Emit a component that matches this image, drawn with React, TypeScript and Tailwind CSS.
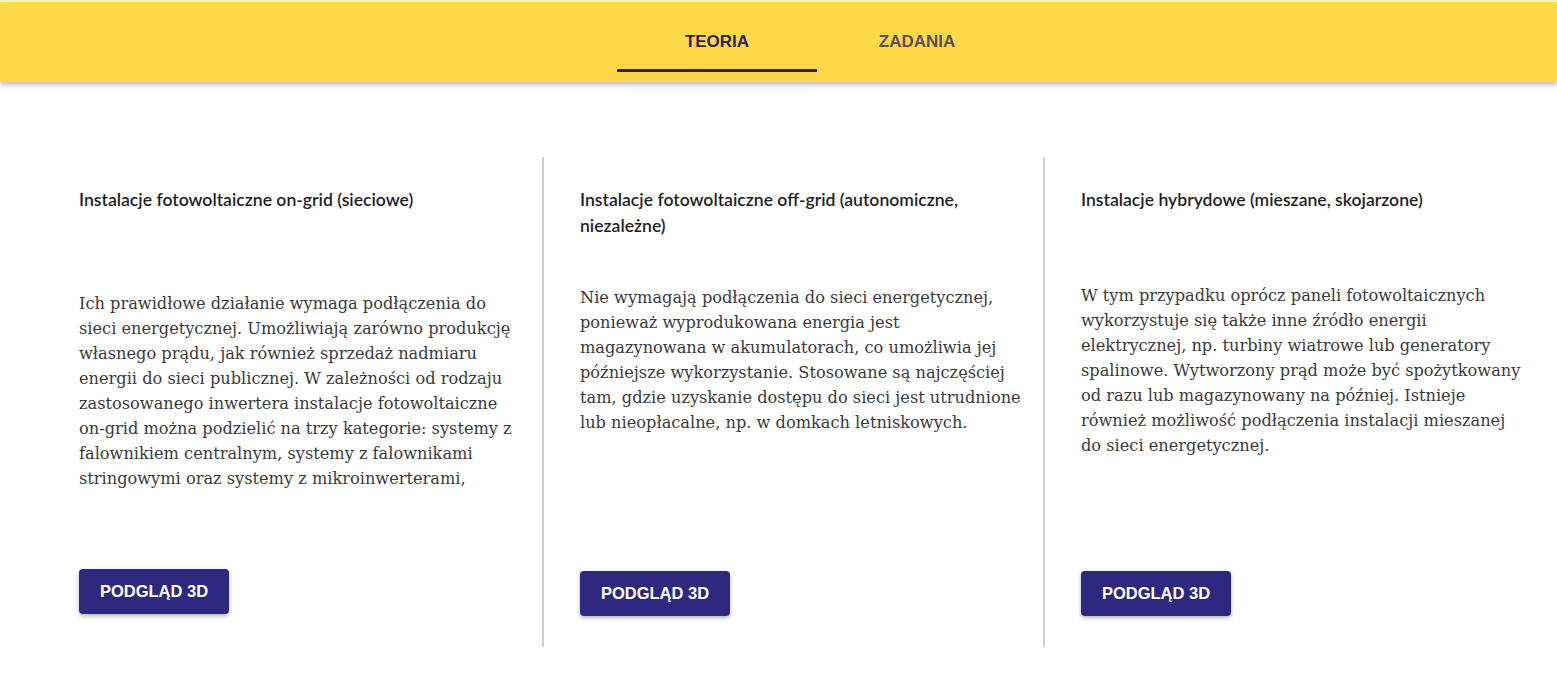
import React, { useState } from "react";

const sections = [
  {
    title: ["Instalacje fotowoltaiczne on-grid (sieciowe)"],
    body: [
      "Ich prawidłowe działanie wymaga podłączenia do",
      "sieci energetycznej. Umożliwiają zarówno produkcję",
      "własnego prądu, jak również sprzedaż nadmiaru",
      "energii do sieci publicznej. W zależności od rodzaju",
      "zastosowanego inwertera instalacje fotowoltaiczne",
      "on-grid można podzielić na trzy kategorie: systemy z",
      "falownikiem centralnym, systemy z falownikami",
      "stringowymi oraz systemy z mikroinwerterami,",
    ],
    bodyTop: "mt-[78px]",
    buttonTop: "mt-[78px]",
  },
  {
    title: ["Instalacje fotowoltaiczne off-grid (autonomiczne,", "niezależne)"],
    body: [
      "Nie wymagają podłączenia do sieci energetycznej,",
      "ponieważ wyprodukowana energia jest",
      "magazynowana w akumulatorach, co umożliwia jej",
      "późniejsze wykorzystanie. Stosowane są najczęściej",
      "tam, gdzie uzyskanie dostępu do sieci jest utrudnione",
      "lub nieopłacalne, np. w domkach letniskowych.",
    ],
    bodyTop: "mt-[46px]",
    buttonTop: "mt-[136px]",
  },
  {
    title: ["Instalacje hybrydowe (mieszane, skojarzone)"],
    body: [
      "W tym przypadku oprócz paneli fotowoltaicznych",
      "wykorzystuje się także inne źródło energii",
      "elektrycznej, np. turbiny wiatrowe lub generatory",
      "spalinowe. Wytworzony prąd może być spożytkowany",
      "od razu lub magazynowany na później. Istnieje",
      "również możliwość podłączenia instalacji mieszanej",
      "do sieci energetycznej.",
    ],
    bodyTop: "mt-[70px]",
    buttonTop: "mt-[113px]",
  },
];

const App = () => {
  const [tab, setTab] = useState("teoria");

  return (
    <div className="min-h-[697px] bg-white">
      <div className="pt-[2px] bg-[#fdf3c8]">
        <header className="h-[80px] bg-[#ffd84a] shadow-[0_3px_5px_rgba(0,0,0,0.25)] flex justify-start pl-[617px]">
          {["teoria", "zadania"].map((t) => (
            <button
              key={t}
              onClick={() => setTab(t)}
              className={`w-[200px] h-[70px] flex items-center justify-center pt-[12px] border-b-[3px] uppercase font-bold text-[17px] ${
                tab === t ? "border-[#2f2354] text-[#2f2354]" : "border-transparent text-[#5e5156]"
              }`}
              style={{ fontFamily: "'Liberation Sans', Arial, sans-serif" }}
            >
              {t}
            </button>
          ))}
        </header>
      </div>

      <main className="flex pl-[43px] pt-[75px]">
        {sections.map((s, i) => (
          <section
            key={i}
            className={`w-[501px] px-[36px] pb-[31px] flex flex-col ${i < 2 ? "border-r-2 border-[#d0d0d0]" : ""}`}
          >
            <h3
              className="mt-[30px] text-[17.6px] leading-[26px] font-semibold text-[#1f1f1f]"
              style={{ fontFamily: "Lato, 'Open Sans', sans-serif" }}
            >
              {s.title.map((l) => (
                <span key={l} className="block whitespace-nowrap">{l}</span>
              ))}
            </h3>
            <p
              className={`${s.bodyTop} text-[16.2px] leading-[25px] text-[#3a3a3a]`}
              style={{ fontFamily: "'DejaVu Serif', 'Liberation Serif', serif" }}
            >
              {s.body.map((l) => (
                <span key={l} className="block whitespace-nowrap">{l}</span>
              ))}
            </p>
            <button
              className={`${s.buttonTop} self-start w-[150px] h-[45px] rounded-[4px] bg-[#2e2880] text-white font-bold text-[16.5px] uppercase shadow-[0_2px_4px_rgba(0,0,0,0.3)]`}
              style={{ fontFamily: "'Liberation Sans', Arial, sans-serif" }}
            >
              Podgląd 3D
            </button>
          </section>
        ))}
      </main>
    </div>
  );
};

export default App;
